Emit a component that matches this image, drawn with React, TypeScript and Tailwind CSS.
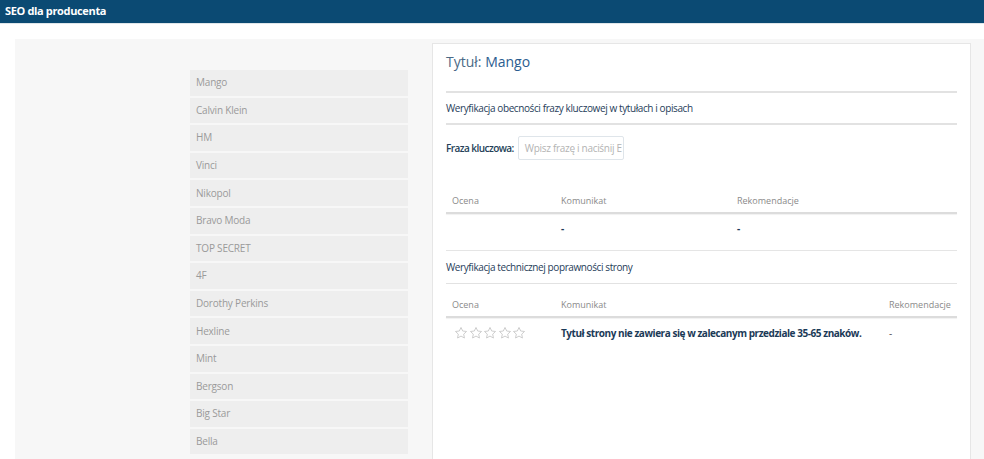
import React from 'react';

const brands = [
  'Mango',
  'Calvin Klein',
  'HM',
  'Vinci',
  'Nikopol',
  'Bravo Moda',
  'TOP SECRET',
  '4F',
  'Dorothy Perkins',
  'Hexline',
  'Mint',
  'Bergson',
  'Big Star',
  'Bella',
];

const Star = () => (
  <svg width="14" height="14" viewBox="0 0 24 24" fill="none" stroke="#c9c9c9" strokeWidth="1.6" strokeLinejoin="round">
    <path d="M12 2.5l2.9 6.1 6.6.8-4.9 4.6 1.3 6.6L12 17.3l-5.9 3.3 1.3-6.6-4.9-4.6 6.6-.8z" />
  </svg>
);

export default function App() {
  return (
    <div className="h-screen overflow-hidden bg-white text-[10px]" style={{ fontFamily: '"Open Sans", "Noto Sans", sans-serif' }}>
      {/* Pasek górny */}
      <div className="h-[24px] bg-[#0b4a73] px-[5px] flex items-center border-b border-[#dfe6ea]">
        <span className="text-white font-bold text-[11px] tracking-[-0.35px]">SEO dla producenta</span>
      </div>

      <div className="pt-[15px] pl-[15px]">
        <div className="bg-[#f7f7f7] flex h-[460px]">
          {/* Lista producentów */}
          <div className="ml-[175px] w-[218px] pt-[31px]">
            {brands.map((b) => (
              <div key={b} className="h-[25.6px] mb-[2px] bg-[#eeeeee] flex items-center pl-[6px] text-[#9a9a9a] tracking-[-0.2px]">
                {b}
              </div>
            ))}
          </div>

          {/* Panel szczegółów */}
          <div className="ml-[24px] mt-[4px] w-[539px] bg-white border border-[#e6e6e6] px-[13px]">
            <div className="h-[47px] pt-[8px] text-[14px] leading-[20px]">
              <span className="text-[#4b6a86]">Tytuł: </span>
              <span className="text-[#2b5d90]">Mango</span>
            </div>
            <div className="border-t-2 border-[#e2e2e2]" />
            <div className="h-[30px] flex items-center text-[#1f3d5a] tracking-[-0.4px]">
              Weryfikacja obecności frazy kluczowej w tytułach i opisach
            </div>
            <div className="border-t-2 border-[#e2e2e2]" />

            <div className="mt-[11px] flex items-center h-[24px]">
              <span className="text-[#243f58] font-semibold tracking-[-0.55px]">Fraza kluczowa:</span>
              <div className="ml-[4px] w-[106px] h-[24px] border border-[#dfe5ea] rounded-[2px] flex items-center pl-[6px] text-[#b3b3b3] overflow-hidden whitespace-nowrap tracking-[-0.3px]">
                Wpisz frazę i naciśnij E
              </div>
            </div>

            {/* Tabela 1 */}
            <div className="mt-[30px] h-[22px] flex items-center text-[9px] text-[#8a8a8a]">
              <span className="w-[115px] pl-[6px]">Ocena</span>
              <span className="w-[176px]">Komunikat</span>
              <span>Rekomendacje</span>
            </div>
            <div className="border-t-2 border-[#dcdcdc] shadow-[0_1px_1px_rgba(0,0,0,0.06)]" />
            <div className="h-[36px] flex items-start pt-[7px] text-[#1b3a57] font-bold">
              <span className="w-[115px]" />
              <span className="w-[176px]">-</span>
              <span>-</span>
            </div>
            <div className="border-t border-[#e5e5e5]" />
            <div className="h-[32px] flex items-center text-[#1f3d5a] tracking-[-0.4px]">
              Weryfikacja technicznej poprawności strony
            </div>
            <div className="border-t border-[#e2e2e2]" />

            {/* Tabela 2 */}
            <div className="mt-[10px] h-[22px] flex items-center text-[9px] text-[#8a8a8a]">
              <span className="w-[115px] pl-[6px]">Ocena</span>
              <span className="w-[328px]">Komunikat</span>
              <span>Rekomendacje</span>
            </div>
            <div className="border-t-2 border-[#dcdcdc] shadow-[0_1px_1px_rgba(0,0,0,0.06)]" />
            <div className="h-[30px] flex items-center">
              <span className="w-[115px] pl-[8px] flex gap-[0.5px]">
                <Star />
                <Star />
                <Star />
                <Star />
                <Star />
              </span>
              <span className="w-[328px] font-bold text-[#1b3a57] tracking-[-0.45px]">
                Tytuł strony nie zawiera się w zalecanym przedziale 35-65 znaków.
              </span>
              <span className="text-[#555]">-</span>
            </div>
          </div>
        </div>
      </div>
    </div>
  );
}
